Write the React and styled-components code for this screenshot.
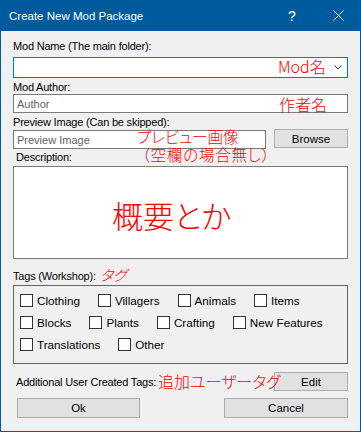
import React from 'react';
import styled, { createGlobalStyle } from 'styled-components';

const GlobalStyle = createGlobalStyle`
  html, body { margin: 0; padding: 0; background: #ffffff; }
  body { font-family: "Liberation Sans", Arial, sans-serif; }
  * { box-sizing: border-box; }
`;

const Window = styled.div`
  position: relative;
  width: 361px;
  height: 432px;
  display: flex;
  flex-direction: column;
  background: #f0f0f0;
  font-family: "Liberation Sans", Arial, sans-serif;
  font-size: 11px;
  color: #000;
  overflow: hidden;
`;

const TitleBar = styled.div`
  height: 31px;
  flex: none;
  background: #005a9e;
  color: #fff;
  display: flex;
  align-items: center;
  padding-left: 9px;
`;

const Title = styled.div`
  flex: 1;
  font-size: 11.5px;
  padding-top: 1px;
`;

const TitleButton = styled.div`
  width: 46px;
  height: 31px;
  display: flex;
  align-items: center;
  justify-content: center;
  color: #fff;
  font-size: 14px;
`;

const Body = styled.div`
  flex: 1;
  border: 1px solid #005a9e;
  border-top: none;
  padding: 0 12px;
  display: flex;
  flex-direction: column;
`;

const Label = styled.div`
  height: 14px;
  line-height: 14px;
  margin-top: ${p => p.$mt || 0}px;
  padding-left: ${p => p.$indent || 0}px;
  letter-spacing: -0.2px;
  white-space: nowrap;
`;

const TextBox = styled.div`
  height: ${p => p.$h}px;
  width: ${p => (p.$w ? `${p.$w}px` : 'auto')};
  margin-top: ${p => p.$mt || 0}px;
  background: #fff;
  border: 1px solid ${p => (p.$focus ? '#0078d7' : '#7a7a7a')};
  display: flex;
  align-items: center;
  padding: 0 5px 0 3px;
  color: #5f5f5f;
  white-space: nowrap;
`;

const Spacer = styled.div`
  flex: 1;
`;

const Row = styled.div`
  display: flex;
  align-items: ${p => p.$align || 'flex-start'};
  justify-content: space-between;
  margin-top: ${p => p.$mt || 0}px;
  padding: ${p => p.$pad || '0'};
`;

const Button = styled.div`
  width: ${p => p.$w}px;
  height: ${p => p.$h}px;
  background: #e1e1e1;
  border: 1px solid #adadad;
  display: flex;
  align-items: center;
  justify-content: center;
  font-size: 11.5px;
  color: #000;
`;

const GroupBox = styled.div`
  height: 79px;
  margin-top: 2px;
  border: 1px solid #646464;
  padding: 3px 6px;
  display: flex;
  flex-direction: column;
`;

const TagRow = styled.div`
  display: flex;
  column-gap: 18px;
  height: 22px;
`;

const TagItem = styled.label`
  display: flex;
  align-items: center;
  gap: 4px;
  font-size: 11.7px;
  white-space: nowrap;
`;

const CheckBox = styled.span`
  width: 13px;
  height: 13px;
  flex: none;
  background: #fff;
  border: 1px solid #333;
`;

const Note = styled.div`
  position: absolute;
  left: ${p => p.$x}px;
  top: ${p => p.$y}px;
  font-family: "Noto Sans CJK JP", "Liberation Sans", sans-serif;
  font-size: ${p => p.$size || 16}px;
  font-weight: 300;
  font-style: ${p => (p.$italic ? 'italic' : 'normal')};
  letter-spacing: ${p => p.$spacing || 0}px;
  line-height: 1;
  color: #ff0000;
  white-space: nowrap;
  font-feature-settings: "palt";
  pointer-events: none;
`;

const Chevron = () => (
  <svg width="8" height="5" viewBox="0 0 8 5">
    <path d="M0.5 0.5 L4 4 L7.5 0.5" fill="none" stroke="#444" strokeWidth="1" />
  </svg>
);

const CloseIcon = () => (
  <svg width="11" height="11" viewBox="0 0 11 11">
    <path d="M0.5 0.5 L10.5 10.5 M10.5 0.5 L0.5 10.5" stroke="#fff" strokeWidth="1" fill="none" />
  </svg>
);

const tagRows = [
  ['Clothing', 'Villagers', 'Animals', 'Items'],
  ['Blocks', 'Plants', 'Crafting', 'New Features'],
  ['Translations', 'Other'],
];

export default function App() {
  return (
    <>
      <GlobalStyle />
      <Window>
        <TitleBar>
          <Title>Create New Mod Package</Title>
          <TitleButton>?</TitleButton>
          <TitleButton><CloseIcon /></TitleButton>
        </TitleBar>
        <Body>
          <Label $mt={8}>Mod Name (The main folder):</Label>
          <TextBox $h={21} $mt={4} $focus>
            <Spacer />
            <Chevron />
          </TextBox>
          <Label $mt={2}>Mod Author:</Label>
          <TextBox $h={19}>Author</TextBox>
          <Label $mt={2}>Preview Image (Can be skipped):</Label>
          <Row>
            <TextBox $h={19} $w={253} $mt={1}>Preview Image</TextBox>
            <Button $w={74} $h={19}>Browse</Button>
          </Row>
          <Label $mt={1} $indent={3}>Description:</Label>
          <TextBox $h={93} $mt={2} />
          <Label $mt={10}>Tags (Workshop):</Label>
          <GroupBox>
            {tagRows.map((row, i) => (
              <TagRow key={i}>
                {row.map(t => (
                  <TagItem key={t}>
                    <CheckBox />
                    {t}
                  </TagItem>
                ))}
              </TagRow>
            ))}
          </GroupBox>
          <Row $mt={8} $align="center">
            <Label $indent={3}>Additional User Created Tags:</Label>
            <Button $w={74} $h={19}>Edit</Button>
          </Row>
          <Row $mt={7} $pad="0 0 0 4px">
            <Button $w={123} $h={20}>Ok</Button>
            <Button $w={124} $h={20}>Cancel</Button>
          </Row>
        </Body>
        <Note $x={278} $y={58}>Mod名</Note>
        <Note $x={279} $y={96}>作者名</Note>
        <Note $x={137} $y={129} $size={15.5}>プレビュー画像</Note>
        <Note $x={142} $y={147} $size={15.5} $spacing={0.8}>（空欄の場合無し）</Note>
        <Note $x={112} $y={199} $size={31}>概要とか</Note>
        <Note $x={100} $y={267} $size={15} $italic>タグ</Note>
        <Note $x={158} $y={373}>追加ユーザータグ</Note>
      </Window>
    </>
  );
}
